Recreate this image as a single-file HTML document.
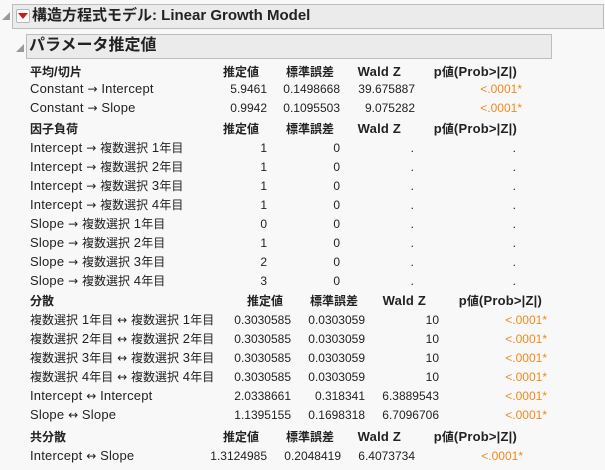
<!DOCTYPE html>
<html><head><meta charset="utf-8"><style>
*{margin:0;padding:0;box-sizing:border-box}
body{width:605px;height:470px;background:#f8f8f8;position:relative;overflow:hidden;font-family:"Liberation Sans","Noto Sans CJK JP",sans-serif;font-size:12px;color:#222}
.bar{position:absolute;background:#ebebeb;border:1px solid #bdbdbd}
.tri{position:absolute;width:0;height:0;border-left:8px solid transparent;border-bottom:8px solid #9a9a9a}
.t{position:absolute;white-space:nowrap;line-height:14px;font-size:12px}
.r{position:absolute;white-space:nowrap;line-height:14px;text-align:right;width:140px}
.b{font-weight:bold}
.l{font-size:13px;letter-spacing:0.2px}
.o{color:#f08a1c}
.a{font-family:"DejaVu Sans",sans-serif;font-size:12px}
</style></head><body>
<div class="bar" style="left:12px;top:4px;width:592px;height:25px"></div>
<div class="tri" style="left:2px;top:12px"></div>
<div style="position:absolute;left:16px;top:9px;width:14px;height:14px;border:1px solid #b8b8b8;background:#fff;border-radius:2px"></div>
<div style="position:absolute;left:18px;top:13px;width:0;height:0;border-left:5px solid transparent;border-right:5px solid transparent;border-top:6px solid #d01818"></div>
<div class="t b" style="left:32px;top:7px;font-size:15px;line-height:18px">構造方程式モデル: Linear Growth Model</div>
<div class="bar" style="left:26px;top:34px;width:526px;height:25px"></div>
<div class="tri" style="left:16px;top:44px"></div>
<div class="t b" style="left:29px;top:37px;font-size:16px;line-height:18px">パラメータ推定値</div>
<div id="c"></div>
<script>
var H='';
function w(s){return s.replace(/([A-Za-z0-9 .\/()>|]+)/g,'<span class="l">$1</span>').replace(/→/g,'<span class="a">→</span>').replace(/↔/g,'<span class="a">↔</span>');}
function t(x,y,s,c){H+='<div class="t '+(c||'')+'" style="left:'+x+'px;top:'+(y-7)+'px">'+w(s)+'</div>';}
function r(x,y,s,c){H+='<div class="r '+(c||'')+'" style="left:'+(x-140)+'px;top:'+(y-7)+'px">'+s+'</div>';}
var A=[259,334,401,517],V=[267,340,415,522];
var B=[283,358,426,542],W=[291,365,439,547];
function hd(y,n,cols){t(30,y,n,'b');var h=['推定値','標準誤差','Wald Z','p値(Prob>|Z|)'];for(var i=0;i<4;i++)r(cols[i],y,w(h[i]),'b');}
function row(y,l,v,cols){t(30,y,l);for(var i=0;i<4;i++)r(cols[i],y,v[i],i==3&&v[i].indexOf('0001')>=0?'o':'');}
var P='&lt;.0001*';
hd(72,'平均/切片',A);
row(89,'Constant → Intercept',['5.9461','0.1498668','39.675887',P],V);
row(108,'Constant → Slope',['0.9942','0.1095503','9.075282',P],V);
hd(129,'因子負荷',A);
var y=148,L=['Intercept','Intercept','Intercept','Intercept','Slope','Slope','Slope','Slope'],E=['1','1','1','1','0','1','2','3'];
for(var i=0;i<8;i++){row(y,L[i]+' → 複数選択 '+(i%4+1)+'年目',[E[i],'0','.','.'],[267,340,414,516]);y+=19;}
hd(301,'分散',B);
y=320;for(var i=1;i<=4;i++){row(y,'複数選択 '+i+'年目 ↔ 複数選択 '+i+'年目',['0.3030585','0.0303059','10',P],W);y+=19;}
row(396,'Intercept ↔ Intercept',['2.0338661','0.318341','6.3889543',P],W);
row(415,'Slope ↔ Slope',['1.1395155','0.1698318','6.7096706',P],W);
hd(437,'共分散',A);
row(456,'Intercept ↔ Slope',['1.3124985','0.2048419','6.4073734',P],[267,341,415,523]);
document.getElementById('c').innerHTML=H;
</script>
</body></html>
